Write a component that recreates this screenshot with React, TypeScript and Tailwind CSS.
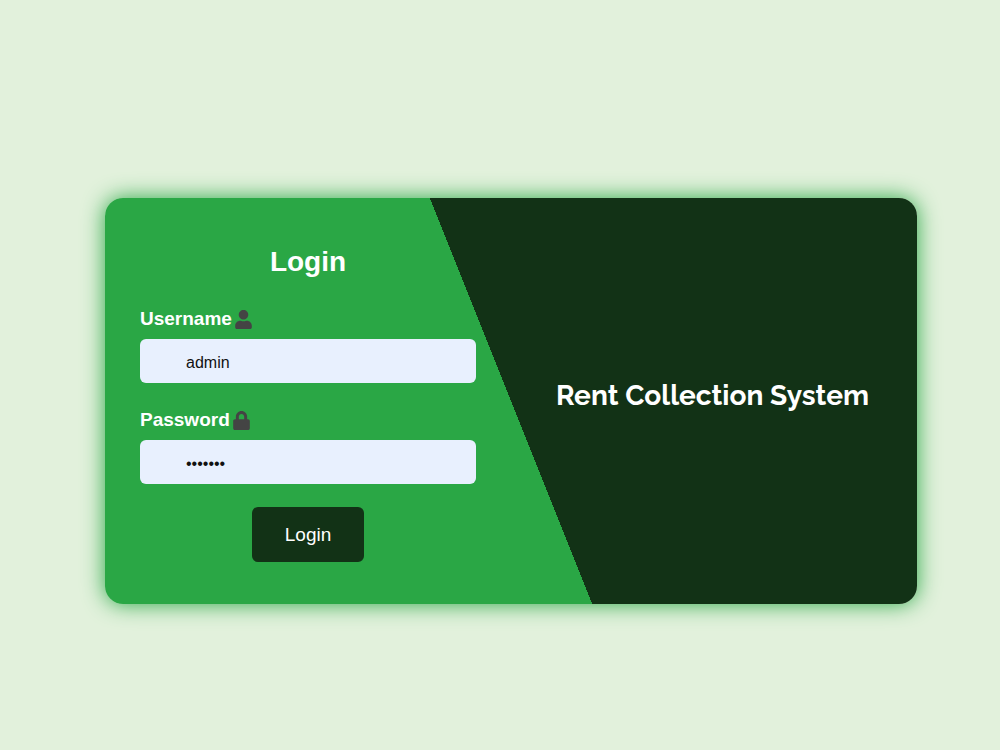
import { useState } from "react";
import { FaLock, FaUser } from "react-icons/fa";

const LABEL_CLASS =
  "mb-2 flex items-center gap-[3px] text-[19px] leading-6 font-bold text-white";

const INPUT_CLASS =
  "block h-11 w-full rounded-md bg-[#e8f0fe] px-[46px] pt-[3px] text-base text-[#111] outline-none focus:ring-2 focus:ring-[#123216]";

export default function App() {
  const [username, setUsername] = useState("admin");
  const [password, setPassword] = useState("1234567");

  return (
    <main className="flex min-h-screen items-center justify-center bg-[#e2f1dc] pt-[52px] pl-[22px] font-['Liberation_Sans',Arial,sans-serif]">
      <div className="flex w-5/6 max-w-[812px] items-stretch rounded-[18px] bg-[linear-gradient(68.2deg,#2aa745_50%,#123216_50%)] shadow-[0_0_22px_#2aa745]">
        {/* Login form */}
        <form
          onSubmit={(e) => e.preventDefault()}
          className="flex w-1/2 flex-col px-[35px] pt-[46px] pb-[42px]"
        >
          <h1 className="mb-[27px] text-center text-[28px] leading-9 font-bold text-white">Login</h1>

          <label htmlFor="username" className={LABEL_CLASS}>
            Username
            <FaUser className="h-[19px] w-[17px] text-[#444]" />
          </label>
          <input
            id="username"
            type="text"
            value={username}
            onChange={(e) => setUsername(e.target.value)}
            className={INPUT_CLASS}
          />

          <div className="mt-[25px]">
            <label htmlFor="password" className={LABEL_CLASS}>
              Password
              <FaLock className="h-[19px] w-[17px] text-[#444]" />
            </label>
            <input
              id="password"
              type="password"
              value={password}
              onChange={(e) => setPassword(e.target.value)}
              className={INPUT_CLASS}
            />
          </div>

          <button
            type="submit"
            className="mt-[23px] self-center rounded-md bg-[#123216] px-[33px] py-4 text-[19px] leading-[23px] text-white hover:bg-[#0d2610]"
          >
            Login
          </button>
        </form>

        {/* Brand side */}
        <div className="flex w-1/2 items-center justify-end pr-12 pb-[10px]">
          <h2 className="text-[28px] leading-9 font-bold whitespace-nowrap text-white font-[Raleway,Lato,sans-serif]">
            Rent Collection System
          </h2>
        </div>
      </div>
    </main>
  );
}
